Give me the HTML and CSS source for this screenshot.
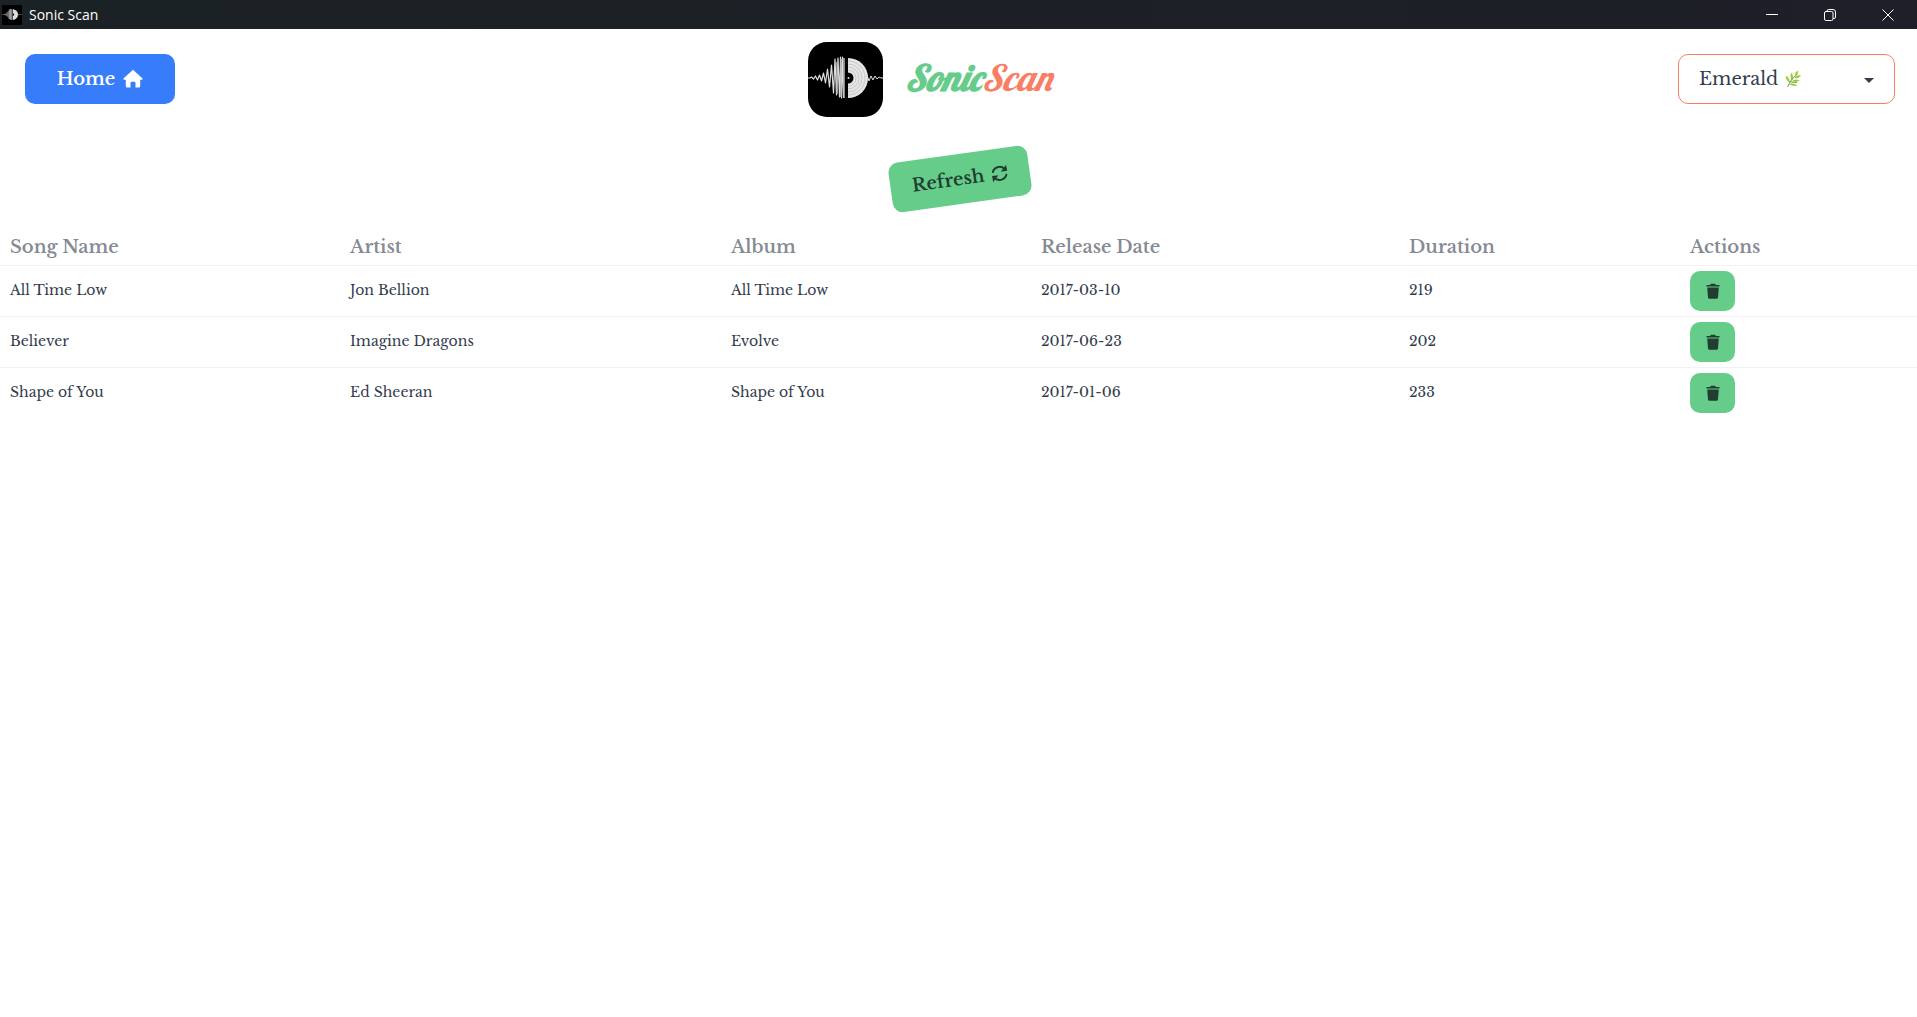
FILE: index.html
```html
<!DOCTYPE html>
<html lang="en">
<head>
<meta charset="utf-8">
<title>Sonic Scan</title>
<link rel="stylesheet" href="styles.css">
</head>
<body>
<svg width="0" height="0" class="defs" aria-hidden="true">
  <symbol id="logo" viewBox="0 0 75 75">
    <rect width="75" height="75" rx="19" fill="#000"/>
    <path d="M40 16a20 20 0 0 1 0 40z" fill="#e6e6e6"/>
    <g fill="none" stroke="#b4b4b4" stroke-width=".6"><path d="M40 19a17 17 0 0 1 0 34M40 22a14 14 0 0 1 0 28M40 25a11 11 0 0 1 0 22M40 28a8 8 0 0 1 0 16"/></g>
    <path d="M40 30.500a5.500 5.500 0 0 1 0 11z" fill="#000"/>
    <circle cx="40.500" cy="36" r="1" fill="#ddd"/>
    <path d="M0 36h2l1.500-1 2 2 2-3 2 4 2-5 2 6 2-8 2 10 2-14 2 18 2-22 2 28 1.500-34 1.500 36 1.500-37 1.500 39 1-40 1 41 1-41 1 41" fill="none" stroke="#ddd" stroke-width="1.200" stroke-linejoin="round"/>
    <path d="M29 20v32M33 17v38M36 16v40" stroke="#bbb" stroke-width="1.500"/>
    <path d="M58 36l1-3 2 6 2-5 2 4 2-4 2 3 2-2 2 1h2" fill="none" stroke="#ddd" stroke-width="1" stroke-linejoin="round"/>
  </symbol>
  <symbol id="trash" viewBox="0 0 14 16">
    <path d="M.500 2h3.500L5 .800h4L10 2h3.500v1.400H.500zM1.200 4.600h11.600L12 14.500a1.500 1.500 0 0 1-1.500 1.200h-7A1.500 1.500 0 0 1 2 14.500z" fill="currentColor"/>
  </symbol>
</svg>

<div class="titlebar">
  <svg class="app-icon" aria-hidden="true"><use href="#logo"/></svg>
  <span class="app-name">Sonic Scan</span>
  <div class="window-controls">
    <button type="button" aria-label="Minimize"><svg viewBox="0 0 12 12"><path d="M0 5.500h12"/></svg></button>
    <button type="button" aria-label="Restore"><svg viewBox="0 0 12 12"><rect x=".500" y="2.500" width="8.500" height="9" rx="1.500"/><path d="M3 2.500V2A1.500 1.500 0 0 1 4.500.500H9A2.500 2.500 0 0 1 11.500 3v5A1.500 1.500 0 0 1 10 9.500H9"/></svg></button>
    <button type="button" aria-label="Close"><svg viewBox="0 0 12 12"><path d="M.500.500l11 11M11.500.500l-11 11"/></svg></button>
  </div>
</div>

<header class="navbar">
  <div class="nav-start">
    <button type="button" class="btn btn-home">Home
      <svg width="20" height="20" viewBox="0 0 20 20" aria-hidden="true"><path d="M10 .800L.700 9.200a.9.9 0 0 0 .6 1.500h1.500v6.300a1.500 1.500 0 0 0 1.500 1.500h3.200v-4.500a1.200 1.200 0 0 1 1.200-1.200h2.600a1.200 1.200 0 0 1 1.200 1.200v4.500h3.200a1.500 1.500 0 0 0 1.500-1.500v-6.300h1.500a.9.9 0 0 0 .6-1.500z" fill="#fff"/></svg>
    </button>
  </div>
  <div class="brand">
    <svg class="logo" role="img" aria-label="Logo"><use href="#logo"/></svg>
    <span class="wordmark"><span class="sonic">Sonic</span><span class="scan">Scan</span></span>
  </div>
  <div class="nav-end">
    <div class="theme">
      <select class="theme-select" aria-label="Theme"><option>Emerald</option></select>
      <svg class="herb" viewBox="0 0 16 18" aria-hidden="true">
        <path d="M2.500 17C5 11 8 8 12 4M5 12.500L2 9M7 10V5M6 12l6 .5" fill="none" stroke="#689f38" stroke-width="1"/>
        <g fill="#aed84a"><path d="M10 7Q9 2 13 .500Q14 4 10 7zM7 9Q4 6 6.500 2.500Q9 6 7 9zM4.500 12Q0 10 1 5.500Q5 8 4.500 12zM10 8Q12 4.500 16 5Q14 9 10 8zM7.500 11Q11 8.500 15 10.500Q11 13 7.500 11zM4.500 14Q9 12.500 12.500 15.500Q8 17 4.500 14z"/></g>
        <path d="M10 7l2.500-4.500M7 9l-.500-4M4.500 12L2 7.500M10 8l4-2M7.500 11l5-.500M4.500 14l5 1" stroke="#7cb342" stroke-width=".700"/>
      </svg>
      <svg class="caret" viewBox="0 0 10 5" aria-hidden="true"><path d="M0 0h10L5 5z" fill="#333c4d"/></svg>
    </div>
  </div>
</header>

<main>
  <div class="toolbar">
    <button type="button" class="btn btn-refresh">Refresh
      <svg width="16" height="16" viewBox="0 0 16 16" aria-hidden="true"><g fill="none" stroke="currentColor" stroke-width="2"><path d="M1.200 6.500A7 7 0 0 1 13.500 4.200M14.800 9.500A7 7 0 0 1 2.500 11.800"/></g><path d="M15.800 0v6.500H9.500zM.200 16V9.500h6.300z" fill="currentColor"/></svg>
    </button>
  </div>

  <table class="songs">
    <colgroup><col class="c-song"><col class="c-artist"><col class="c-album"><col class="c-date"><col class="c-duration"><col></colgroup>
    <thead>
      <tr><th>Song Name</th><th>Artist</th><th>Album</th><th>Release Date</th><th>Duration</th><th>Actions</th></tr>
    </thead>
    <tbody>
      <tr><td>All Time Low</td><td>Jon Bellion</td><td>All Time Low</td><td>2017-03-10</td><td>219</td><td class="actions"><button type="button" class="btn-delete" aria-label="Delete All Time Low"><svg><use href="#trash"/></svg></button></td></tr>
      <tr><td>Believer</td><td>Imagine Dragons</td><td>Evolve</td><td>2017-06-23</td><td>202</td><td class="actions"><button type="button" class="btn-delete" aria-label="Delete Believer"><svg><use href="#trash"/></svg></button></td></tr>
      <tr><td>Shape of You</td><td>Ed Sheeran</td><td>Shape of You</td><td>2017-01-06</td><td>233</td><td class="actions"><button type="button" class="btn-delete" aria-label="Delete Shape of You"><svg><use href="#trash"/></svg></button></td></tr>
    </tbody>
  </table>
</main>
</body>
</html>
```
FILE: styles.css
```css
* { box-sizing: border-box; }
body {
  margin: 0;
  background: #fff;
  color: #333c4d;
  font-family: "Libre Baskerville", "Liberation Serif", serif;
  font-size: 14px;
}
button, select { font: inherit; color: inherit; cursor: pointer; }
.defs { position: absolute; }

.titlebar {
  display: flex;
  align-items: center;
  height: 29px;
  padding-left: 2px;
  background: linear-gradient(90deg, #1b2225, #1e1f28);
  color: #fff;
  font-family: "Segoe UI", "Open Sans", sans-serif;
  font-size: 14px;
}
.app-icon { width: 20px; height: 20px; margin-right: 7px; background: #000; }
.window-controls { display: flex; margin-left: auto; }
.window-controls button {
  display: grid;
  place-items: center;
  width: 58px;
  height: 29px;
  padding: 0;
  border: 0;
  background: none;
}
.window-controls svg { width: 12px; height: 12px; fill: none; stroke: #fff; }

.navbar {
  display: grid;
  grid-template-columns: 1fr auto 1fr;
  align-items: start;
  padding: 13px 22px 13px 25px;
}
.nav-start, .nav-end { display: flex; padding-top: 12px; }
.nav-end { justify-content: flex-end; }
.btn {
  display: inline-flex;
  align-items: center;
  justify-content: center;
  gap: 8px;
  height: 50px;
  padding: 0;
  border: 0;
  border-radius: 10px;
  font-size: 18px;
  font-weight: 600;
}
.btn-home { width: 150px; background: #377cfb; color: #fff; }
.brand { display: flex; align-items: center; gap: 22px; margin-right: 60px; }
.logo { width: 75px; height: 75px; }
.wordmark {
  padding-bottom: 4px;
  font-family: "Lobster", "Kaushan Script", "Lato", sans-serif;
  font-size: 36px;
  font-style: italic;
  line-height: 48px;
}
.sonic { color: #66cc8a; font-weight: 700; }
.scan { color: #f87f66; font-weight: 400; }

.theme { position: relative; }
.theme-select {
  width: 217px;
  height: 50px;
  padding: 0 20px;
  appearance: none;
  border: 1px solid #f68067;
  border-radius: 10px;
  background: #fff;
  font-size: 18px;
}
.herb { position: absolute; left: 107px; top: 16px; width: 16px; height: 18px; pointer-events: none; }
.caret { position: absolute; right: 21px; top: 24px; width: 10px; height: 5px; pointer-events: none; }

.toolbar { display: flex; justify-content: center; padding: 24px 0 22px 2px; }
.btn-refresh {
  width: 140px;
  background: #66cc8a;
  color: #223d30;
  transform: rotate(-8deg);
}

.songs { width: 100%; table-layout: fixed; border-collapse: collapse; }
.c-song { width: 17.74%; }
.c-artist { width: 19.87%; }
.c-album { width: 16.17%; }
.c-date { width: 19.2%; }
.c-duration { width: 14.66%; }
.songs th {
  height: 39px;
  padding: 4px 10px 0;
  color: #858a94;
  font-size: 18px;
  font-weight: 600;
  text-align: left;
}
.songs td { height: 51px; padding: 0 10px 2px; }
.songs .actions { padding-bottom: 0; }
.songs tr { border-bottom: 1px solid #f2f2f2; }
.songs tbody tr:last-child { border-bottom: 0; }
.btn-delete {
  display: grid;
  place-items: center;
  width: 45px;
  height: 40px;
  padding: 0;
  border: 0;
  border-radius: 10px;
  background: #66cc8a;
  color: #223d30;
}
.btn-delete svg { width: 14px; height: 16px; }
```
